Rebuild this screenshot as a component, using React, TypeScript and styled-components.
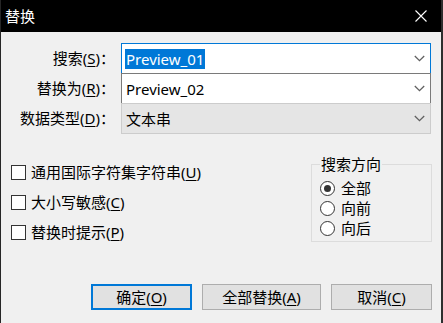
import React from "react";
import styled, { createGlobalStyle } from "styled-components";

const Global = createGlobalStyle`
  html, body { margin: 0; padding: 0; background: #f0f0f0; overflow: hidden; }
  * { box-sizing: border-box; }
`;

const FONT = `"Noto Sans", "Noto Sans CJK SC", sans-serif`;

const Window = styled.div`
  width: 443px;
  height: 323px;
  display: flex;
  flex-direction: column;
  border-left: 1px solid #262626;
  border-right: 2px solid #2e2e2e;
  font-family: ${FONT};
  font-size: 15px;
  color: #000;
`;

const TitleBar = styled.div`
  height: 32px;
  flex: none;
  background: #000;
  color: #fff;
  display: flex;
  align-items: center;
  justify-content: space-between;
  padding: 0 14px 0 4px;
  font-size: 15px;
  line-height: 20px;
`;

const Body = styled.div`
  flex: 1;
  background: #f0f0f0;
  display: flex;
  flex-direction: column;
  padding: 11px 9px 13px 10px;
`;

const FormGrid = styled.div`
  display: grid;
  grid-template-columns: 104px 310px;
  grid-auto-rows: 30px;
  column-gap: 6px;
`;

const Label = styled.div`
  justify-self: end;
  align-self: center;
  white-space: nowrap;
  line-height: 20px;
`;

const Key = styled.span`
  text-decoration: underline;
  text-underline-offset: 2px;
  text-decoration-thickness: 1px;
`;

const Combo = styled.div<{ $variant: "focus" | "normal" | "disabled" }>`
  height: 31px;
  display: flex;
  align-items: center;
  padding-left: 3px;
  border: 1px solid
    ${(p) => (p.$variant === "focus" ? "#0078d7" : p.$variant === "disabled" ? "#cccccc" : "#7a7a7a")};
  background: ${(p) => (p.$variant === "disabled" ? "#e5e5e5" : "#fff")};
  position: relative;
  z-index: ${(p) => (p.$variant === "focus" ? 0 : 0)};
`;

const ComboText = styled.span<{ $selected?: boolean }>`
  flex: 1;
  line-height: 20px;
  span {
    background: ${(p) => (p.$selected ? "#0078d7" : "transparent")};
    color: ${(p) => (p.$selected ? "#fff" : "#000")};
    padding: 0 1px;
  }
`;

const Chevron = styled.svg`
  margin-right: 5px;
  flex: none;
`;

const Middle = styled.div`
  margin-top: 21px;
  display: flex;
  justify-content: space-between;
  align-items: flex-start;
`;

const CheckList = styled.div`
  padding-top: 3px;
  display: flex;
  flex-direction: column;
`;

const CheckRow = styled.div`
  height: 30px;
  display: flex;
  align-items: center;
  line-height: 20px;
`;

const CheckBox = styled.span`
  width: 15px;
  height: 15px;
  border: 1px solid #333;
  background: #fff;
  margin-right: 5px;
  flex: none;
`;

const GroupBox = styled.fieldset`
  margin: 0;
  width: 121px;
  min-width: 0;
  padding: 4px 8px 3px 8px;
  border: 1px solid #dcdcdc;
`;

const Legend = styled.legend`
  padding: 0 1px;
  line-height: 20px;
  font-size: 15px;
`;

const RadioRow = styled.div`
  height: 20px;
  display: flex;
  align-items: center;
  line-height: 20px;
`;

const Radio = styled.span<{ $checked?: boolean }>`
  width: 15px;
  height: 15px;
  border-radius: 50%;
  border: 1px solid #333;
  background: #fff;
  margin-right: 6px;
  flex: none;
  display: flex;
  align-items: center;
  justify-content: center;
  &::after {
    content: "";
    width: 7px;
    height: 7px;
    border-radius: 50%;
    background: ${(p) => (p.$checked ? "#333" : "transparent")};
  }
`;

const ButtonRow = styled.div`
  margin-top: auto;
  display: flex;
  justify-content: flex-end;
  gap: 10px;
`;

const Button = styled.button<{ $w: number; $default?: boolean }>`
  width: ${(p) => p.$w}px;
  height: 26px;
  margin: 0;
  padding: 0;
  font-family: ${FONT};
  font-size: 15px;
  line-height: 20px;
  color: #000;
  background: #e1e1e1;
  border: ${(p) => (p.$default ? "2px solid #0078d7" : "1px solid #adadad")};
`;

const ChevronIcon = () => (
  <Chevron width="11" height="7" viewBox="0 0 11 7">
    <polyline points="0.8,1 5.5,5.6 10.2,1" fill="none" stroke="#606060" strokeWidth="1.3" />
  </Chevron>
);

export default function App() {
  return (
    <>
      <Global />
      <Window>
        <TitleBar>
          <span>替换</span>
          <svg width="12" height="12" viewBox="0 0 12 12">
            <path d="M0.5 0.5 L11.5 11.5 M11.5 0.5 L0.5 11.5" stroke="#fff" strokeWidth="1.1" />
          </svg>
        </TitleBar>
        <Body>
          <FormGrid>
            <Label>
              搜索(<Key>S</Key>)：
            </Label>
            <Combo $variant="focus">
              <ComboText $selected>
                <span>Preview_01</span>
              </ComboText>
              <ChevronIcon />
            </Combo>
            <Label>
              替换为(<Key>R</Key>)：
            </Label>
            <Combo $variant="normal">
              <ComboText>
                <span>Preview_02</span>
              </ComboText>
              <ChevronIcon />
            </Combo>
            <Label>
              数据类型(<Key>D</Key>)：
            </Label>
            <Combo $variant="disabled">
              <ComboText>
                <span>文本串</span>
              </ComboText>
              <ChevronIcon />
            </Combo>
          </FormGrid>
          <Middle>
            <CheckList>
              <CheckRow>
                <CheckBox />
                通用国际字符集字符串(<Key>U</Key>)
              </CheckRow>
              <CheckRow>
                <CheckBox />
                大小写敏感(<Key>C</Key>)
              </CheckRow>
              <CheckRow>
                <CheckBox />
                替换时提示(<Key>P</Key>)
              </CheckRow>
            </CheckList>
            <GroupBox>
              <Legend>搜索方向</Legend>
              <RadioRow>
                <Radio $checked />
                全部
              </RadioRow>
              <RadioRow>
                <Radio />
                向前
              </RadioRow>
              <RadioRow>
                <Radio />
                向后
              </RadioRow>
            </GroupBox>
          </Middle>
          <ButtonRow>
            <Button $w={101} $default>
              确定(<Key>O</Key>)
            </Button>
            <Button $w={119}>
              全部替换(<Key>A</Key>)
            </Button>
            <Button $w={101}>
              取消(<Key>C</Key>)
            </Button>
          </ButtonRow>
        </Body>
      </Window>
    </>
  );
}
